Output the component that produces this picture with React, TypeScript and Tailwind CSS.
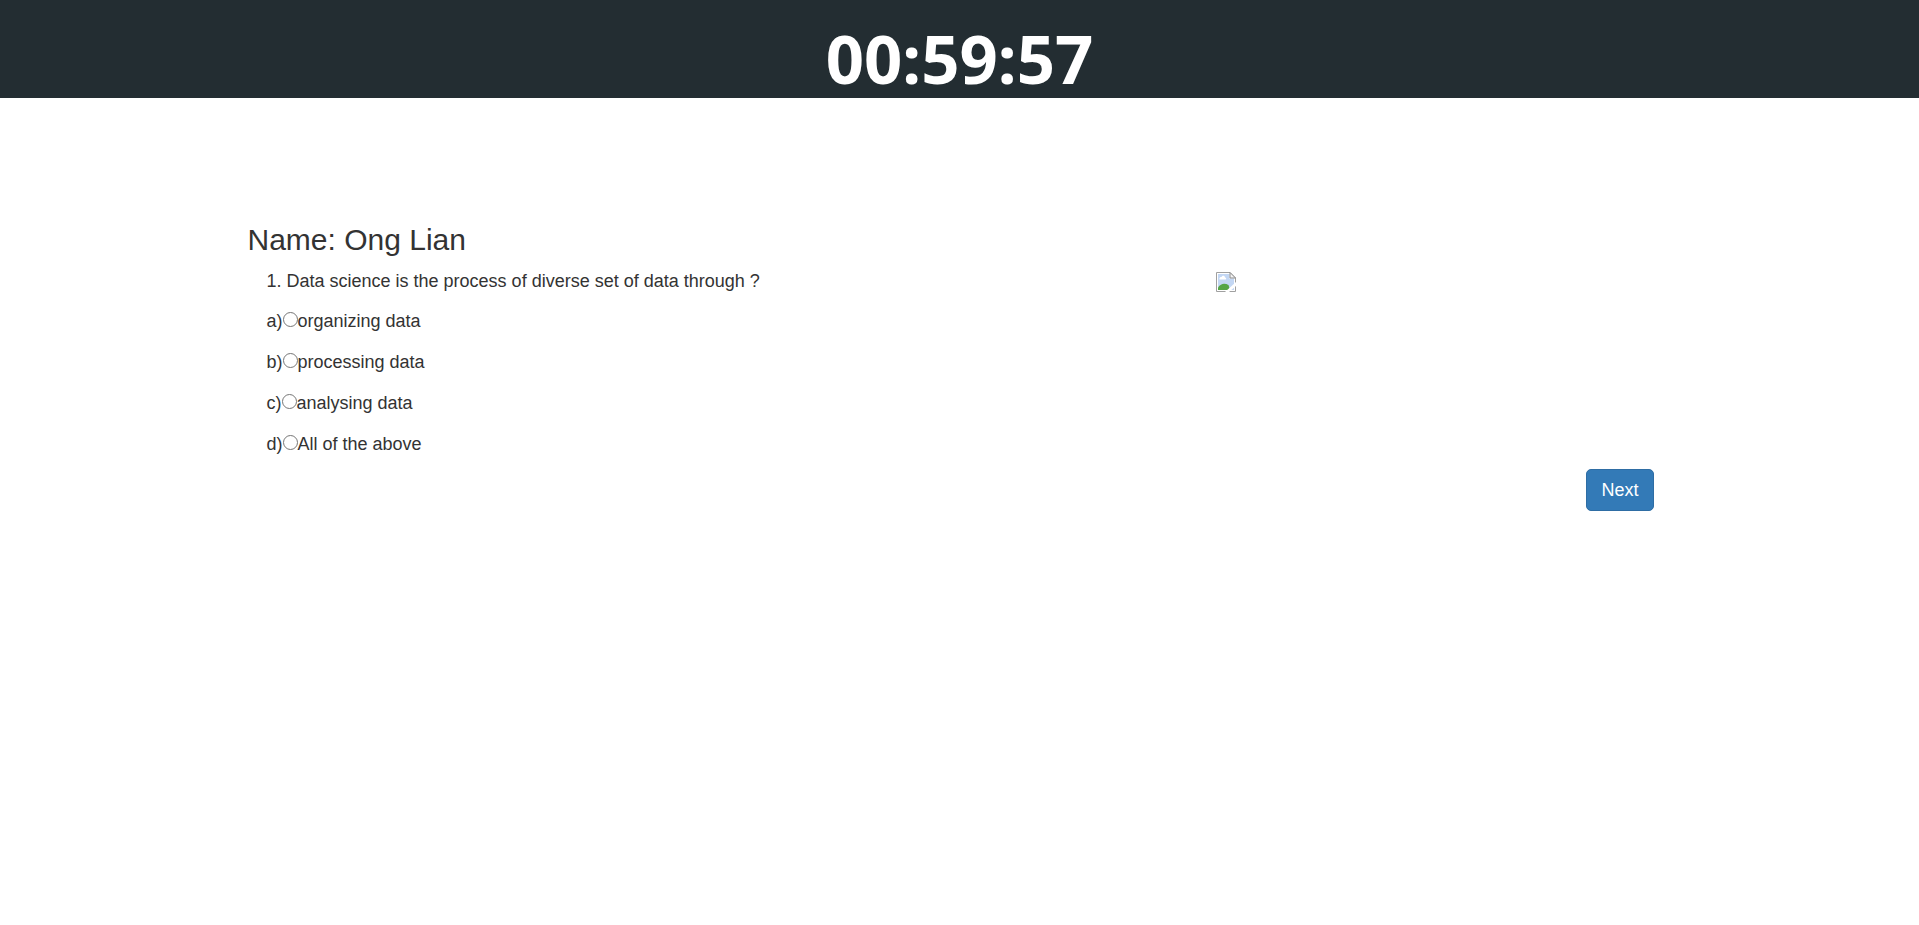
const options = [
  { letter: 'a', text: 'organizing data' },
  { letter: 'b', text: 'processing data' },
  { letter: 'c', text: 'analysing data' },
  { letter: 'd', text: 'All of the above' },
];

function MissingImage() {
  return (
    <svg width="20" height="20" viewBox="0 0 20 20" role="img" aria-label="Missing image">
      <path d="M.5.5H14L19.500 6V19.500H.5Z" fill="#fff" stroke="#a0a0a0" />
      <path d="M2 2H13.500V6.500H18V18H2Z" fill="#c3d7f4" />
      <path d="M3.500 7.500C3 5.500 4.500 5 5.500 5C6.500 3 9 3.500 9 5.500C10.500 5.500 10.500 7.500 9.500 7.500Z" fill="#fff" />
      <path d="M2 18V15.500C5 11 9 11 12.500 13L14 18Z" fill="#55a546" />
      <path d="M14 .5V6H19.500Z" fill="#f4f4f4" stroke="#8c8c8c" />
      <path d="M20 10L9 20H13L20 14Z" fill="#fff" />
    </svg>
  );
}

export default function App() {
  return (
    <div className="font-['Liberation_Sans',Arial,sans-serif] text-lg text-[#333]">
      <header className="flex h-[98px] items-end justify-center bg-[#232d32]">
        <div
          role="timer"
          className="font-['Noto_Sans',sans-serif] text-[67px] leading-[80px] font-bold text-white"
        >
          00:59:57
        </div>
      </header>
      <main className="mx-auto max-w-[1424px] pt-[124px]">
        <h1 className="text-[30px] leading-9">Name: Ong Lian</h1>
        <div className="grid grid-cols-3 pt-2.5">
          <fieldset className="col-span-2 px-[19px]">
            <legend className="pt-px leading-6">
              1. Data science is the process of diverse set of data through ?
            </legend>
            <div className="flex flex-col gap-[15px] pt-[15px]">
              {options.map(({ letter, text }) => (
                <label key={letter} className="flex h-[26px] items-center">
                  <span>{letter})</span>
                  <input
                    type="radio"
                    name="answer"
                    value={letter}
                    className="mb-1 size-[15px] appearance-none rounded-full border border-[#767676] bg-white checked:border-4 checked:border-[#0075ff]"
                  />
                  <span>{text}</span>
                </label>
              ))}
            </div>
          </fieldset>
          <div className="px-[19px] pt-1">
            <MissingImage />
          </div>
        </div>
        <div className="flex justify-end px-[18px] pt-3">
          <button
            type="button"
            className="rounded-[5px] border border-[#2e6da4] bg-[#337ab7] px-3.5 py-2 leading-6 text-white"
          >
            Next
          </button>
        </div>
      </main>
    </div>
  );
}
